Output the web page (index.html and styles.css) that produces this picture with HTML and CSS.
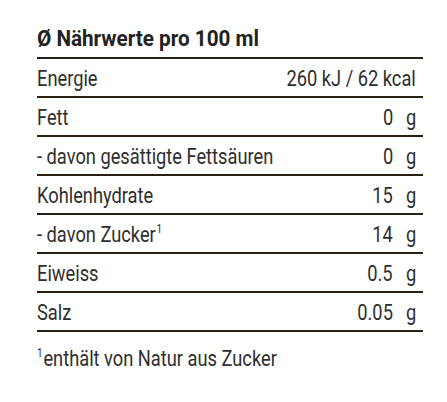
FILE: index.html
```html
<!DOCTYPE html>
<html lang="de">
<head>
<meta charset="utf-8">
<link rel="stylesheet" href="styles.css">
</head>
<body>
<section class="nutrition">
  <h2 class="title"><span class="c">Ø Nährwerte pro 100 ml</span></h2>
  <div class="table">
    <div class="row"><span class="label"><span class="c">Energie</span></span><span class="value wide"><span class="c r">260 kJ / 62 kcal</span></span></div>
    <div class="row"><span class="label"><span class="c">Fett</span></span><span class="value"><span class="c r">0</span></span><span class="unit"><span class="c r">g</span></span></div>
    <div class="row"><span class="label"><span class="c">- davon gesättigte Fettsäuren</span></span><span class="value"><span class="c r">0</span></span><span class="unit"><span class="c r">g</span></span></div>
    <div class="row"><span class="label"><span class="c">Kohlenhydrate</span></span><span class="value"><span class="c r">15</span></span><span class="unit"><span class="c r">g</span></span></div>
    <div class="row"><span class="label"><span class="c">- davon Zucker<sup>1</sup></span></span><span class="value"><span class="c r">14</span></span><span class="unit"><span class="c r">g</span></span></div>
    <div class="row"><span class="label"><span class="c">Eiweiss</span></span><span class="value"><span class="c r">0.5</span></span><span class="unit"><span class="c r">g</span></span></div>
    <div class="row"><span class="label"><span class="c">Salz</span></span><span class="value"><span class="c r">0.05</span></span><span class="unit"><span class="c r">g</span></span></div>
  </div>
  <p class="note"><span class="c"><sup>1</sup>enthält von Natur aus Zucker</span></p>
</section>
</body>
</html>
```
FILE: styles.css
```css
* { box-sizing: border-box; }
html, body { margin: 0; padding: 0; background: #ffffff; }
body {
  font-family: Roboto, "Liberation Sans", sans-serif;
  color: #2e2e2e;
  width: 447px;
  height: 402px;
}
.nutrition {
  padding: 26px 24px 0 37px;
}
.c {
  display: inline-block;
  white-space: nowrap;
  transform: scaleX(0.83);
  transform-origin: left center;
}
.c.r { transform-origin: right center; }
.title {
  margin: 0;
  font-size: 22px;
  font-weight: 700;
  line-height: 25px;
  color: #222;
  padding-bottom: 6px;
}
.title .c { transform: scaleX(0.94); }
.table {
  border-top: 2px solid #2b1f0f;
}
.row {
  display: flex;
  align-items: center;
  height: 39px;
  border-bottom: 2px solid #2b1f0f;
  font-size: 22px;
  padding-right: 7px;
  padding-top: 1px;
}
.label { flex: 1; }
.value { text-align: right; }
.unit { width: 23px; text-align: right; }
sup {
  font-size: 12px;
  line-height: 0;
  vertical-align: 9px;
  margin-left: 1px;
}
.note {
  margin: 14px 0 0;
  font-size: 22px;
  line-height: 26px;
}
.note sup { margin-left: 0; margin-right: 1px; }
```
